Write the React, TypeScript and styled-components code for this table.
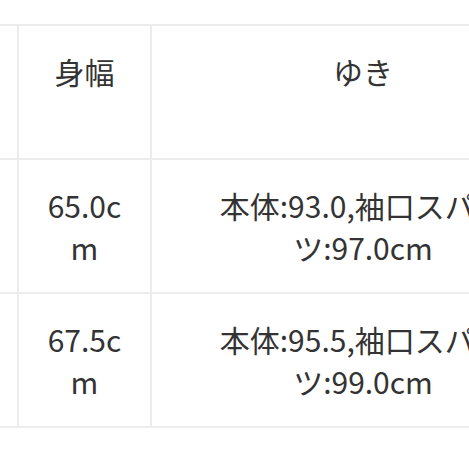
import styled, { createGlobalStyle } from "styled-components"

const GlobalStyle = createGlobalStyle`
    html, body {
        margin: 0;
        padding: 0;
        background: #ffffff;
    }
    body {
        font-family: "Noto Sans CJK JP", "Noto Sans", sans-serif;
        color: #333333;
    }
`

const rows = [
    { size: "M", width: "65.0cm", sleeve: "本体:93.0,袖口スパンツ:97.0cm", length: "73.0cm" },
    { size: "L", width: "67.5cm", sleeve: "本体:95.5,袖口スパンツ:99.0cm", length: "75.0cm" },
]

function App() {
    return (
        <>
            <GlobalStyle />
            <Viewport>
                <SizeTable>
                    <colgroup>
                        <Col w={180} />
                        <Col w={133} />
                        <Col w={424} />
                        <Col w={180} />
                    </colgroup>
                    <thead>
                        <tr>
                            <HeadCell>サイズ</HeadCell>
                            <HeadCell>身幅</HeadCell>
                            <HeadCell>ゆき</HeadCell>
                            <HeadCell>着丈</HeadCell>
                        </tr>
                    </thead>
                    <tbody>
                        {rows.map((row, n) => (
                            <tr key={'row' + n}>
                                <Cell>{row.size}</Cell>
                                <Cell>{row.width}</Cell>
                                <Cell>{row.sleeve}</Cell>
                                <Cell>{row.length}</Cell>
                            </tr>
                        ))}
                    </tbody>
                </SizeTable>
            </Viewport>
        </>
    )
}

export default App

//#region Styles
const Viewport = styled.div`
    width: 469px;
    height: 469px;
    overflow: hidden;
    padding-top: 24px;
    box-sizing: border-box;
`

const SizeTable = styled.table`
    margin-left: -163px;
    border-collapse: collapse;
    table-layout: fixed;
    width: 917px;
`

const Col = styled.col<{ w: number }>`
    width: ${props => props.w}px;
`

const HeadCell = styled.th`
    height: 84px;
    padding: 24px 26px;
    border: 2px solid #ececec;
    vertical-align: top;
    text-align: center;
    font-weight: 400;
    font-size: 30px;
    line-height: 42px;
`

const Cell = styled.td`
    padding: 24px 26px;
    border: 2px solid #ececec;
    vertical-align: middle;
    text-align: center;
    font-size: 30px;
    line-height: 42px;
    overflow-wrap: anywhere;
`
//#endregion
